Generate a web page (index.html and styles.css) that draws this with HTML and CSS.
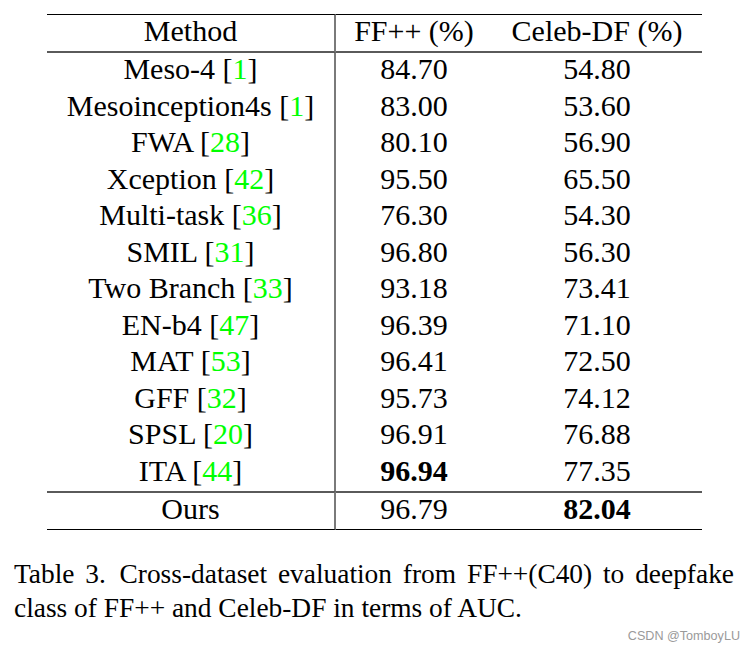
FILE: index.html
```html
<!DOCTYPE html>
<html lang="en">
<head>
<meta charset="utf-8">
<title>Table 3</title>
<link rel="stylesheet" href="styles.css">
</head>
<body>
<main class="page">
  <table class="results">
    <thead>
      <tr>
        <th class="c-method">Method</th>
        <th class="c-ff">FF++ (%)</th>
        <th class="c-cd">Celeb-DF (%)</th>
      </tr>
    </thead>
    <tbody>
      <tr><td class="c-method">Meso-4 [<span class="cite">1</span>]</td><td>84.70</td><td>54.80</td></tr>
      <tr><td class="c-method">Mesoinception4s [<span class="cite">1</span>]</td><td>83.00</td><td>53.60</td></tr>
      <tr><td class="c-method">FWA [<span class="cite">28</span>]</td><td>80.10</td><td>56.90</td></tr>
      <tr><td class="c-method">Xception [<span class="cite">42</span>]</td><td>95.50</td><td>65.50</td></tr>
      <tr><td class="c-method">Multi-task [<span class="cite">36</span>]</td><td>76.30</td><td>54.30</td></tr>
      <tr><td class="c-method">SMIL [<span class="cite">31</span>]</td><td>96.80</td><td>56.30</td></tr>
      <tr><td class="c-method">Two Branch [<span class="cite">33</span>]</td><td>93.18</td><td>73.41</td></tr>
      <tr><td class="c-method">EN-b4 [<span class="cite">47</span>]</td><td>96.39</td><td>71.10</td></tr>
      <tr><td class="c-method">MAT [<span class="cite">53</span>]</td><td>96.41</td><td>72.50</td></tr>
      <tr><td class="c-method">GFF [<span class="cite">32</span>]</td><td>95.73</td><td>74.12</td></tr>
      <tr><td class="c-method">SPSL [<span class="cite">20</span>]</td><td>96.91</td><td>76.88</td></tr>
      <tr><td class="c-method">ITA [<span class="cite">44</span>]</td><td><b class="best">96.94</b></td><td>77.35</td></tr>
    </tbody>
    <tfoot>
      <tr class="ours"><td class="c-method">Ours</td><td>96.79</td><td><b class="best">82.04</b></td></tr>
    </tfoot>
  </table>
  <p class="caption">Table 3.&ensp;Cross-dataset evaluation from FF++(C40) to deepfake class of FF++ and Celeb-DF in terms of AUC.</p>
  <div class="watermark">CSDN @TomboyLU</div>
</main>
</body>
</html>
```

FILE: styles.css
```css
html, body {
  margin: 0;
  padding: 0;
  background: #ffffff;
}

.page {
  width: 755px;
  height: 652px;
  padding-top: 14px;
  box-sizing: border-box;
  font-family: "Liberation Serif", "Times New Roman", serif;
  color: #000;
  display: flex;
  flex-direction: column;
}

.results {
  margin-left: 47px;
  border-collapse: separate;
  border-spacing: 0;
  table-layout: fixed;
  width: 655px;
  font-size: 30px;
  line-height: 32px;
}

.results th,
.results td {
  box-sizing: border-box;
  padding: 0 0 4.5px 0;
  text-align: center;
  font-weight: normal;
  white-space: nowrap;
}

.results th {
  border-top: 1px solid #000;
  border-bottom: 2px solid #5a5a5a;
  padding-bottom: 4px;
}

.results .c-method {
  border-right: 2px solid #7a7a7a;
}

.results th.c-method { width: 289px; }
.results th.c-ff { width: 156px; }
.results th.c-cd { width: 210px; }

.results .ours td {
  border-top: 2px solid #5a5a5a;
  border-bottom: 1px solid #000;
  padding-bottom: 4px;
}

.cite {
  color: #00ff00;
}

.best {
  font-weight: bold;
}

.caption {
  margin: 26.5px 0 0 14px;
  width: 720px;
  font-size: 27.4px;
  line-height: 34.5px;
  text-align: justify;
  text-align-last: left;
}

.watermark {
  align-self: flex-end;
  margin: 3px 15px 0 0;
  font-family: "Liberation Sans", Arial, sans-serif;
  font-size: 12.6px;
  line-height: 15px;
  color: #9a9a9a;
}
```
